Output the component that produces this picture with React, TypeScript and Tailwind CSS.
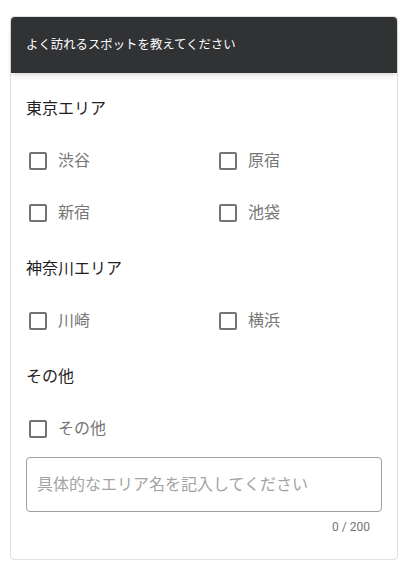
const areas = [
  { id: 1, title: "東京エリア", spots: ["渋谷", "原宿", "新宿", "池袋"] },
  { id: 2, title: "神奈川エリア", spots: ["川崎", "横浜"] },
  { id: 3, title: "その他", spots: ["その他"] },
];

const Check = ({ label }: { label: string }) => {
  return (
    <label className="h-[52px] flex items-center cursor-pointer">
      <span className="w-6 h-6 flex items-center justify-center">
        <span className="w-[18px] h-[18px] border-2 border-[#737373] rounded-[2px]" />
      </span>
      <span className="ml-2 text-[16px] text-[#767676] leading-6">{label}</span>
    </label>
  );
};

const App = () => {
  return (
    <div
      className="w-[408px] h-[572px] bg-white pt-4 px-[10px]"
      style={{ fontFamily: 'Roboto, "Noto Sans CJK JP", sans-serif' }}
    >
      <div className="border border-[#e0e0e0] rounded bg-white">
        <div className="h-[56px] bg-[#313234] rounded-t flex items-center px-[15px] shadow-md">
          <p className="text-white text-[12.4px] leading-5">よく訪れるスポットを教えてください</p>
        </div>
        {/* 本文 */}
        <div className="px-[15px] pt-[24px] pb-[24px]">
          {areas.map((area, i) => (
            <div key={area.id} className={i > 0 ? "mt-[18px]" : ""}>
              <p className="h-6 leading-6 text-[16px] text-[#1f1f1f]">{area.title}</p>
              <div className="mt-[14px] grid grid-cols-[190px_1fr]">
                {area.spots.map((s) => (
                  <Check key={s} label={s} />
                ))}
              </div>
            </div>
          ))}
          <div className="mt-[2px] h-[55px] border border-[#9e9e9e] rounded flex items-center px-[10px]">
            <span className="text-[16px] text-[#a3a3a3]">具体的なエリア名を記入してください</span>
          </div>
          <p className="mt-[7px] h-4 leading-4 text-[12px] text-[#757575] text-right pr-3">0 / 200</p>
        </div>
      </div>
    </div>
  );
};

export default App;
